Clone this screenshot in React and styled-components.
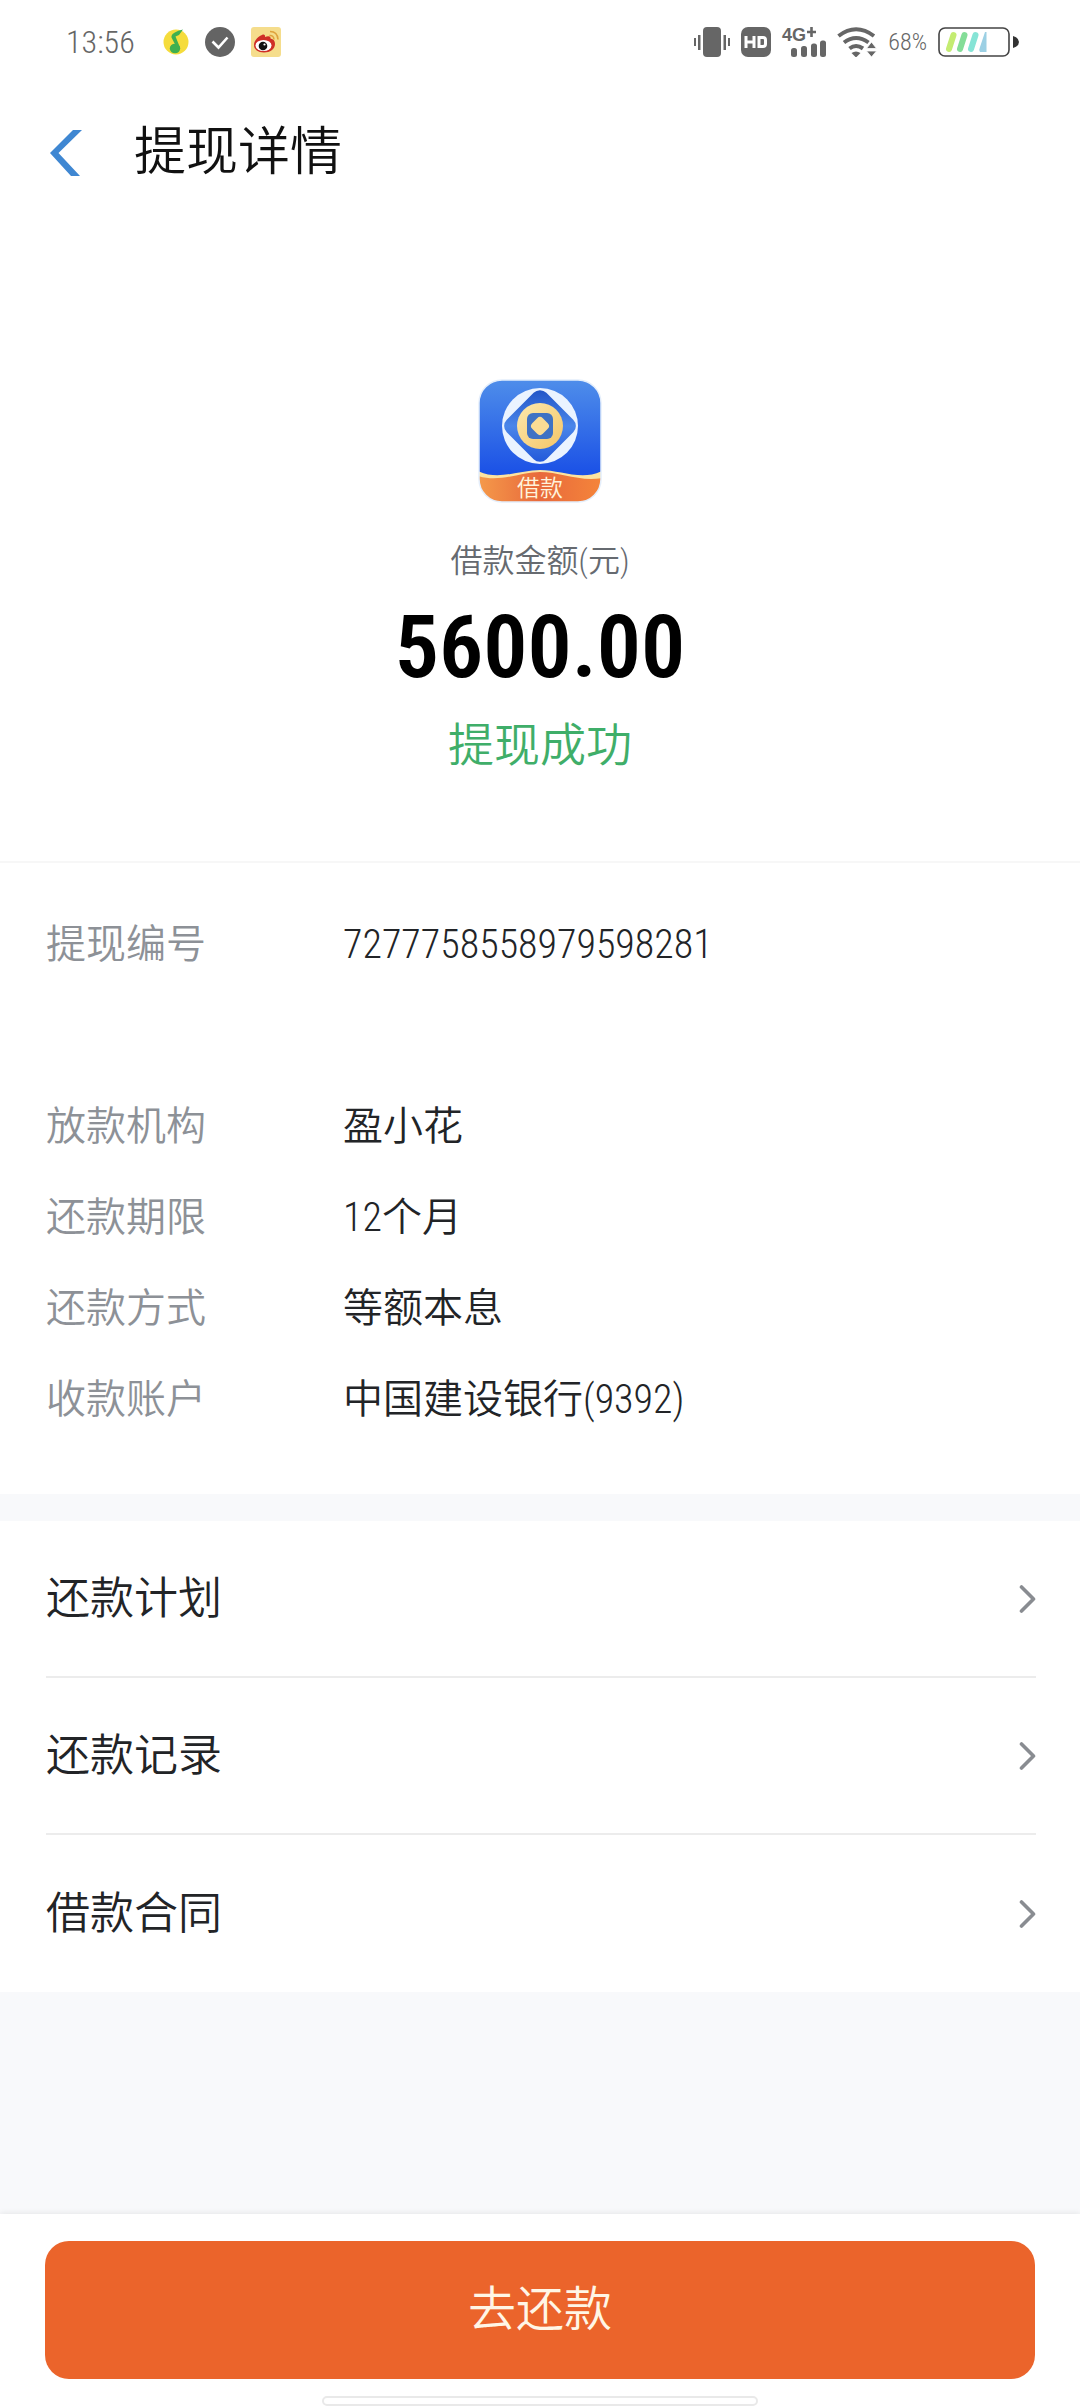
import React from 'react';
import styled, { createGlobalStyle, ThemeProvider } from 'styled-components';

const theme = {
  main: '#eb642b',
  blue: '#3f87d2',
  green: '#3fae69',
  txt: '#222427',
  sub: '#8d9197',
  grayBg: '#f8f9fb',
  line: '#ececec',
  font: "'Roboto Condensed', 'Noto Sans CJK SC', sans-serif",
};

const GlobalStyle = createGlobalStyle`
  * {
    box-sizing: border-box;
    margin: 0;
    padding: 0;
  }
  body {
    background-color: #fff;
  }
  a {
    color: inherit;
    text-decoration: none;
  }
  button {
    border: none;
    background: none;
    cursor: pointer;
  }
  svg {
    display: block;
    flex-shrink: 0;
  }
`;

const Page = styled.div`
  display: flex;
  flex-direction: column;
  min-height: 100vh;
  font-family: ${({ theme }) => theme.font};
  font-weight: 350;
  color: ${({ theme }) => theme.txt};
  background-color: #fff;
`;

const StatusBar = styled.div`
  display: flex;
  justify-content: space-between;
  align-items: center;
  height: 84px;
  padding: 0 60px 0 66px;
  color: #666;
`;

const StatusGroup = styled.div`
  display: flex;
  align-items: center;
  gap: ${({ $gap }) => $gap}px;
`;

const Clock = styled.time`
  font-size: 32px;
  line-height: 32px;
  margin-right: 12px;
`;

const Percent = styled.span`
  font-size: 24px;
  line-height: 32px;
`;

const Header = styled.header`
  display: flex;
  align-items: center;
  gap: 52px;
  height: 138px;
  padding: 0 50px;
  h1 {
    font-size: 52px;
    line-height: 64px;
    font-weight: 350;
    color: #111;
  }
`;

const Summary = styled.section`
  display: flex;
  flex-direction: column;
  align-items: center;
  padding: 157px 0 80px;
  border-bottom: 2px solid #f7f7f7;
`;

const AmountLabel = styled.p`
  margin-top: 34px;
  font-size: 32px;
  line-height: 48px;
  color: #666a70;
`;

const Amount = styled.p`
  margin: 14px 0;
  font-size: 88px;
  line-height: 96px;
  font-weight: 600;
  color: #000;
`;

const Success = styled.p`
  font-size: 46px;
  line-height: 72px;
  color: ${({ theme }) => theme.green};
`;

const Details = styled.dl`
  padding: 36px 46px 49px;
`;

const DetailRow = styled.div`
  display: flex;
  align-items: center;
  min-height: 91px;
  margin-bottom: ${({ $spaced }) => ($spaced ? 91 : 0)}px;
  font-size: 40px;
  line-height: 56px;
  dt {
    width: 297px;
    color: ${({ theme }) => theme.sub};
  }
`;

const Menu = styled.nav`
  padding: 0 44px 0 46px;
  border-top: 27px solid ${({ theme }) => theme.grayBg};
`;

const MenuItem = styled.a`
  display: flex;
  justify-content: space-between;
  align-items: center;
  height: 157px;
  font-size: 44px;
  line-height: 56px;
  border-bottom: 2px solid ${({ theme }) => theme.line};
  &:last-child {
    border-bottom: none;
  }
`;

const Filler = styled.div`
  flex: 1;
  min-height: 120px;
  background-color: ${({ theme }) => theme.grayBg};
`;

const Footer = styled.footer`
  position: relative;
  display: flex;
  flex-direction: column;
  align-items: center;
  padding: 27px 45px 2px;
  background-color: #fff;
  box-shadow: 0 -1px 6px rgba(0, 0, 0, 0.08);
`;

const RepayButton = styled.button`
  width: 100%;
  height: 138px;
  border-radius: 24px;
  background-color: ${({ theme }) => theme.main};
  color: #fff6e6;
  font: 350 48px/64px ${({ theme }) => theme.font};
`;

const HomeBar = styled.div`
  width: 44%;
  height: 10px;
  margin-top: 17px;
  border: 2px solid #e9e9e9;
  border-radius: 5px;
`;

const MusicIcon = () => (
  <svg width="26" height="26" viewBox="0 0 26 26">
    <circle cx="13" cy="13" r="12.5" fill="#f5dc3c" />
    <ellipse cx="12" cy="19.5" rx="5.2" ry="4.8" fill="#3fb04f" />
    <path d="M8.5 7Q9.500 3 20 .5L16 6 12.500 7.500 17 18.500 14.500 20 8.500 8.500Z" fill="#3fb04f" />
  </svg>
);

const CheckIcon = () => (
  <svg width="30" height="30" viewBox="0 0 30 30">
    <circle cx="15" cy="15" r="15" fill="#646464" />
    <path d="M7.500 14.500l6 6L22.500 10.500" fill="none" stroke="#fff" strokeWidth="2.600" />
  </svg>
);

const WeiboIcon = () => (
  <svg width="30" height="30" viewBox="0 0 30 30">
    <rect width="30" height="30" rx="3" fill="#f5dd8c" />
    <path
      d="M3 18C3 13 8 9 11 8c2-1 3.500 0 3 2 3-1.500 6-1 5.500 1.500 3 .5 4.500 2.500 4.500 5.500 0 5-5 8.500-11 8.500S3 22.500 3 18Z"
      fill="#cf2f27"
    />
    <ellipse cx="12.500" cy="18.500" rx="8" ry="5.600" fill="#fff" />
    <circle cx="12" cy="19" r="4.300" fill="#111" />
    <circle cx="13.500" cy="17.500" r="1.100" fill="#fff" />
    <path d="M18.500 8.500q4-.5 4.500 4M19 4.500q7.500 0 8 8" fill="none" stroke="#dfa23c" strokeWidth="1.600" />
  </svg>
);

const VibrateIcon = () => (
  <svg width="36" height="30" viewBox="0 0 36 30" fill="#666">
    <rect x="9" width="18" height="30" rx="4" />
    <rect x="4" y="8" width="2.500" height="15" />
    <rect x="0" y="11" width="2" height="8" />
    <rect x="29.500" y="8" width="2.500" height="15" />
    <rect x="34" y="11" width="2" height="8" />
  </svg>
);

const HdIcon = () => (
  <svg width="30" height="30" viewBox="0 0 30 30">
    <rect width="30" height="30" rx="7" fill="#666" />
    <path d="M5 9v12M13 9v12M5 15h8M18 10.500h4q2.500 0 2.500 2.500v4q0 2.500-2.500 2.500h-4Z" fill="none" stroke="#fff" strokeWidth="3" />
  </svg>
);

const SignalIcon = () => (
  <svg width="44" height="30" viewBox="0 0 44 30" fill="#666" overflow="visible">
    <text x="0" y="14" fontFamily="Liberation Sans" fontWeight="700" fontSize="18">
      4G
    </text>
    <path d="M29.500 0v10M25 5h9" stroke="#666" strokeWidth="2.600" />
    <rect x="9" y="21" width="6" height="9" rx="2.500" />
    <rect x="19" y="19" width="6" height="11" rx="2.500" />
    <rect x="29" y="16.500" width="6" height="13.500" rx="2.500" />
    <rect x="38" y="13.500" width="6" height="16.500" rx="2.500" />
  </svg>
);

const WifiIcon = () => (
  <svg width="40" height="30" viewBox="0 0 40 30">
    <g fill="none" stroke="#666" strokeWidth="4">
      <path d="M1.500 9Q19 -4.500 37 9" />
      <path d="M7 15.500q12-9 24.500 0" />
      <path d="M12.500 21.500q6.500-5 13.500 0" />
    </g>
    <path d="M14.500 26q4.500-3 9 0L19 30.500Z" fill="#666" />
    <path d="M29.500 21.500L34.500 15l5 6.500ZM29.500 24h10l-5 6Z" fill="#666" stroke="#fff" strokeWidth=".8" />
  </svg>
);

const BatteryIcon = () => (
  <svg width="82" height="30" viewBox="0 0 82 30">
    <rect x="1" y="1" width="70" height="28" rx="6" fill="#fff" stroke="#444" strokeWidth="1.600" />
    <g strokeWidth="6" strokeLinecap="round">
      <path d="M15.500 8L11 22" stroke="#c4ec72" />
      <path d="M26.500 8L22 22" stroke="#84dd98" />
      <path d="M37.500 8L33 22" stroke="#86e4d6" />
    </g>
    <path d="M47 5h1.500v20H42q-1.500-2 0-5Z" fill="#9cd0e4" />
    <path d="M75 9q6 2 6 6t-6 6Z" fill="#333" />
  </svg>
);

const BackIcon = () => (
  <svg width="32" height="46" viewBox="0 0 32 46">
    <path d="M23 0h9L8.500 23 30 46H21L0 23Z" fill={theme.blue} />
  </svg>
);

const ArrowIcon = () => (
  <svg width="17" height="30" viewBox="0 0 17 30">
    <path
      d="M2.500 3l12 12L2.500 27"
      fill="none"
      stroke="#898c91"
      strokeWidth="3.600"
      strokeLinecap="round"
      strokeLinejoin="round"
    />
  </svg>
);

const AppLogo = () => (
  <svg width="124" height="124" viewBox="0 0 124 124">
    <defs>
      <linearGradient id="sky" x1="0" y1="0" x2="0" y2="1">
        <stop offset="0" stopColor="#4f8eea" />
        <stop offset=".75" stopColor="#1c52e6" />
      </linearGradient>
      <linearGradient id="gem" x1="0" y1="0" x2="1" y2="1">
        <stop offset="0" stopColor="#1d50c4" />
        <stop offset=".5" stopColor="#4a86ea" />
        <stop offset="1" stopColor="#1f55d8" />
      </linearGradient>
      <linearGradient id="gold" x1="0" y1="0" x2="1" y2="1">
        <stop offset="0" stopColor="#fce9ae" />
        <stop offset="1" stopColor="#f5c566" />
      </linearGradient>
      <linearGradient id="wave" x1="0" y1="0" x2="1" y2="0">
        <stop offset="0" stopColor="#f59a4a" />
        <stop offset=".5" stopColor="#e86a3c" />
        <stop offset="1" stopColor="#f5853a" />
      </linearGradient>
      <clipPath id="tile">
        <rect x="1" y="1" width="122" height="122" rx="23" />
      </clipPath>
    </defs>
    <g clipPath="url(#tile)">
      <rect width="124" height="124" fill="url(#sky)" />
      <path d="M0 92C20 102 42 91 62 91s42 11 62 1v32H0Z" fill="#fde3a0" />
      <path d="M0 97C22 104 42 93 62 93s40 10 62 6v25H0Z" fill="url(#wave)" />
    </g>
    <rect x="1" y="1" width="122" height="122" rx="23" fill="none" stroke="#e4eefb" strokeWidth="1.500" />
    <circle cx="62" cy="47" r="38" fill="#eaf3ff" />
    <rect x="34" y="19" width="56" height="56" rx="9" fill="url(#gem)" transform="rotate(45 62 47)" />
    <circle cx="62" cy="47" r="23" fill="url(#gold)" />
    <rect x="49" y="34" width="26" height="26" rx="6" fill="#3f72c4" />
    <rect x="54.500" y="39.500" width="15" height="15" rx="4" fill="#fbdc94" transform="rotate(45 62 47)" />
    <text x="62" y="117" textAnchor="middle" fontFamily="Noto Sans CJK SC" fontSize="23" fill="#fff3dc">
      借款
    </text>
  </svg>
);

const details = [
  { label: '提现编号', value: '7277758558979598281', spaced: true },
  { label: '放款机构', value: '盈小花' },
  { label: '还款期限', value: '12个月' },
  { label: '还款方式', value: '等额本息' },
  { label: '收款账户', value: '中国建设银行(9392)' },
];

const links = ['还款计划', '还款记录', '借款合同'];

const App = () => {
  return (
    <ThemeProvider theme={theme}>
      <GlobalStyle />
      <Page>
        <StatusBar>
          <StatusGroup $gap={16}>
            <Clock>13:56</Clock>
            <MusicIcon />
            <CheckIcon />
            <WeiboIcon />
          </StatusGroup>
          <StatusGroup $gap={11}>
            <VibrateIcon />
            <HdIcon />
            <SignalIcon />
            <WifiIcon />
            <Percent>68%</Percent>
            <BatteryIcon />
          </StatusGroup>
        </StatusBar>
        <Header>
          <button type="button" aria-label="返回">
            <BackIcon />
          </button>
          <h1>提现详情</h1>
        </Header>
        <Summary>
          <AppLogo />
          <AmountLabel>借款金额(元)</AmountLabel>
          <Amount>5600.00</Amount>
          <Success>提现成功</Success>
        </Summary>
        <Details>
          {details.map(({ label, value, spaced }) => (
            <DetailRow key={label} $spaced={spaced}>
              <dt>{label}</dt>
              <dd>{value}</dd>
            </DetailRow>
          ))}
        </Details>
        <Menu>
          {links.map((text) => (
            <MenuItem href="#" key={text}>
              {text}
              <ArrowIcon />
            </MenuItem>
          ))}
        </Menu>
        <Filler />
        <Footer>
          <RepayButton type="button">去还款</RepayButton>
          <HomeBar />
        </Footer>
      </Page>
    </ThemeProvider>
  );
};

export default App;
